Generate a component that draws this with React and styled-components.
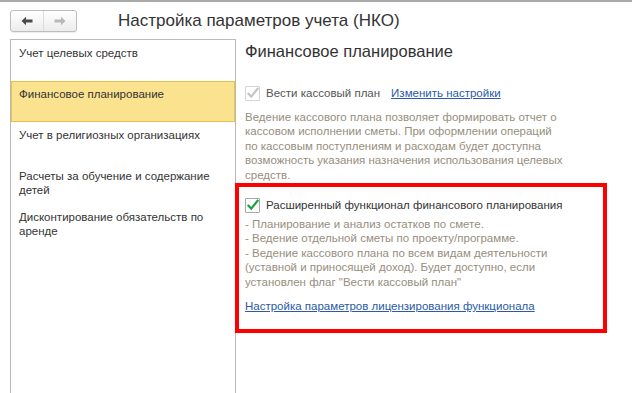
import React from "react";
import styled, { createGlobalStyle } from "styled-components";

const sections = [
  "Учет целевых средств",
  "Финансовое планирование",
  "Учет в религиозных организациях",
  "Расчеты за обучение и содержание детей",
  "Дисконтирование обязательств по аренде",
];

const Global = createGlobalStyle`
  html, body {
    margin: 0;
    padding: 0;
    background: #fff;
  }
  body {
    font-family: "Liberation Sans", Arial, sans-serif;
    color: #333;
  }
`;

const CheckIcon = ({ color }) => (
  <svg width="13" height="13" viewBox="0 0 13 13">
    <path
      d="M2.5 6.8 L5.2 9.6 L11.5 1.8"
      fill="none"
      stroke={color}
      strokeWidth="2.2"
      strokeLinecap="square"
    />
  </svg>
);

const Arrow = ({ color, flip }) => (
  <svg width="12" height="10" viewBox="0 0 12 10" style={flip ? { transform: "scaleX(-1)" } : undefined}>
    <path d="M0.5 5 L5 0.8 L5 3.6 L11.5 3.6 L11.5 6.4 L5 6.4 L5 9.2 Z" fill={color} />
  </svg>
);

const App = () => {
  const selected = 1;

  return (
    <Window>
      <Global />
      <Header>
        <NavGroup>
          <NavButton>
            <Arrow color="#4a4a4a" />
          </NavButton>
          <NavButton>
            <Arrow color="#b8b8b8" flip />
          </NavButton>
        </NavGroup>
        <Title>Настройка параметров учета (НКО)</Title>
      </Header>

      <Body>
        <SideList>
          {sections.map((name, i) => (
            <SideItem key={name} $selected={i === selected}>
              {name}
            </SideItem>
          ))}
        </SideList>

        <Content>
          <Heading>Финансовое планирование</Heading>

          <CheckRow>
            <CheckBox $disabled>
              <CheckIcon color="#c4c4c4" />
            </CheckBox>
            <Label $muted>Вести кассовый план</Label>
            <LinkText href="#" $gap>Изменить настройки</LinkText>
          </CheckRow>

          <Note>
            Ведение кассового плана позволяет формировать отчет о<br />
            кассовом исполнении сметы. При оформлении операций<br />
            по кассовым поступлениям и расходам будет доступна<br />
            возможность указания назначения использования целевых<br />
            средств.
          </Note>

          <Highlight>
            <CheckRow>
              <CheckBox>
                <CheckIcon color="#1aa33c" />
              </CheckBox>
              <Label>Расширенный функционал финансового планирования</Label>
            </CheckRow>
            <Note $tight>
              - Планирование и анализ остатков по смете.<br />
              - Ведение отдельной сметы по проекту/программе.<br />
              - Ведение кассового плана по всем видам деятельности<br />
              (уставной и приносящей доход). Будет доступно, если<br />
              установлен флаг "Вести кассовый план"
            </Note>
            <LinkRow>
              <LinkText href="#">Настройка параметров лицензирования функционала</LinkText>
            </LinkRow>
          </Highlight>
        </Content>
      </Body>
    </Window>
  );
};

const Window = styled.div`
  width: 632px;
  height: 393px;
  overflow: hidden;
  border-top: 2px solid #a9a9a9;
  box-sizing: border-box;
  display: flex;
  flex-direction: column;
`;

const Header = styled.div`
  display: flex;
  align-items: center;
  height: 37px;
  padding: 0 0 0 10px;
  gap: 41px;
`;

const NavGroup = styled.div`
  display: flex;
  height: 20px;
  border: 1px solid #bdbdbd;
  border-radius: 3px;
  background: linear-gradient(#ffffff, #ececec);
  box-shadow: 0 1px 1px rgba(0, 0, 0, 0.08);
`;

const NavButton = styled.div`
  width: 32px;
  display: flex;
  align-items: center;
  justify-content: center;
  & + & {
    border-left: 1px solid #dcdcdc;
  }
`;

const Title = styled.div`
  font-size: 17px;
  color: #333;
  margin-top: 1px;
`;

const Body = styled.div`
  flex: 1;
  display: flex;
  padding-left: 10px;
`;

const SideList = styled.div`
  width: 224px;
  flex-shrink: 0;
  border: 1px solid #b9b9b9;
  border-bottom: none;
  display: flex;
  flex-direction: column;
`;

const SideItem = styled.div`
  box-sizing: border-box;
  min-height: 41px;
  padding: 5px 8px 2px 7px;
  border: 1px solid ${(p) => (p.$selected ? "#e6c24e" : "transparent")};
  background: ${(p) => (p.$selected ? "#fbe28f" : "transparent")};
  font-size: 11.5px;
  line-height: 14px;
  color: #333;
`;

const Content = styled.div`
  flex: 1;
  padding: 3px 0 0 9px;
  display: flex;
  flex-direction: column;
  align-items: flex-start;
`;

const Heading = styled.div`
  font-size: 16.5px;
  color: #333;
  line-height: 19px;
  margin-bottom: 24px;
`;

const CheckRow = styled.div`
  display: flex;
  align-items: center;
  height: 16px;
`;

const CheckBox = styled.div`
  width: 13px;
  height: 13px;
  border: 1px solid ${(p) => (p.$disabled ? "#d4d4d4" : "#a8a8a8")};
  background: #fff;
  border-radius: 1px;
  display: flex;
  margin-right: 6px;
`;

const Label = styled.span`
  font-size: 11.5px;
  color: ${(p) => (p.$muted ? "#555" : "#333")};
`;

const LinkText = styled.a`
  font-size: 11.5px;
  color: #2a5aa8;
  text-decoration: underline;
  margin-left: ${(p) => (p.$gap ? "11px" : "0")};
`;

const Note = styled.div`
  margin-top: ${(p) => (p.$tight ? "4px" : "9px")};
  font-size: 11.5px;
  line-height: 14.4px;
  color: #978e7d;
`;

const Highlight = styled.div`
  box-sizing: border-box;
  width: 372px;
  height: 150px;
  margin: 1px 0 0 -10px;
  padding: 10px 0 0 6px;
  border: 4px solid #ff0000;
  display: flex;
  flex-direction: column;
  align-items: flex-start;
`;

const LinkRow = styled.div`
  margin-top: 7px;
`;

export default App;
